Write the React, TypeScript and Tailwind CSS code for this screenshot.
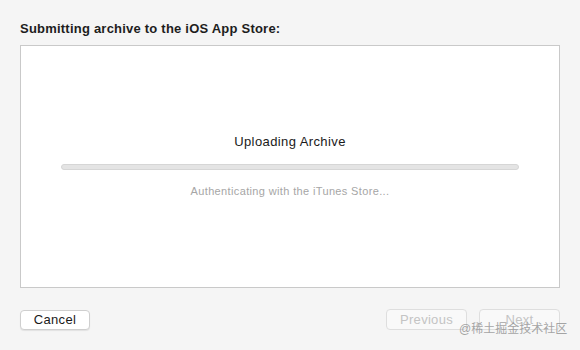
export default function App() {
  const sans = { fontFamily: '"Liberation Sans", "Noto Sans CJK SC", Arial, sans-serif' };

  return (
    <div className="relative w-[580px] h-[350px] bg-[#f5f5f5] overflow-hidden" style={sans}>
      <div className="flex flex-col px-[20px] pt-[21px]">
        {/* Title */}
        <h1 className="text-[13px] leading-[16px] font-bold tracking-[0.22px] text-[#1d1d1d] mb-[8px]">
          Submitting archive to the iOS App Store:
        </h1>

        {/* Content box */}
        <div className="h-[243px] w-[540px] bg-white border border-[#c9c9c9] flex flex-col items-center pt-[88px]">
          <div className="text-[13px] leading-[16px] tracking-[0.4px] text-[#1a1a1a]">Uploading Archive</div>
          <div className="mt-[14px] w-[458px] h-[6px] rounded-full bg-[#e4e4e4] border border-[#d6d6d6]" />
          <div className="mt-[14px] text-[11px] leading-[14px] tracking-[0.36px] text-[#a6a6a6]">
            Authenticating with the iTunes Store...
          </div>
        </div>

        {/* Buttons */}
        <div className="flex items-center mt-[21px]">
          <button className="w-[70px] h-[20px] rounded-[4px] bg-white border border-[#cfcfcf] shadow-[0_1px_1px_rgba(0,0,0,0.08)] text-[13px] leading-[16px] tracking-[0.3px] text-[#1a1a1a]">
            Cancel
          </button>
          <div className="ml-auto flex gap-[12px]">
            <button className="w-[81px] h-[21px] rounded-[4px] bg-[#f9f9f9] border border-[#dedede] text-[13px] leading-[16px] tracking-[0.3px] text-[#c4c4c4]">
              Previous
            </button>
            <button className="w-[81px] h-[21px] rounded-[4px] bg-[#f9f9f9] border border-[#dedede] text-[13px] leading-[16px] tracking-[0.3px] text-[#c4c4c4]">
              Next
            </button>
          </div>
        </div>
      </div>

      {/* Watermark */}
      <div className="absolute left-[459px] top-[322px] text-[12px] leading-[15px] text-[#8e8e8e]/80">
        @稀土掘金技术社区
      </div>
    </div>
  );
}
